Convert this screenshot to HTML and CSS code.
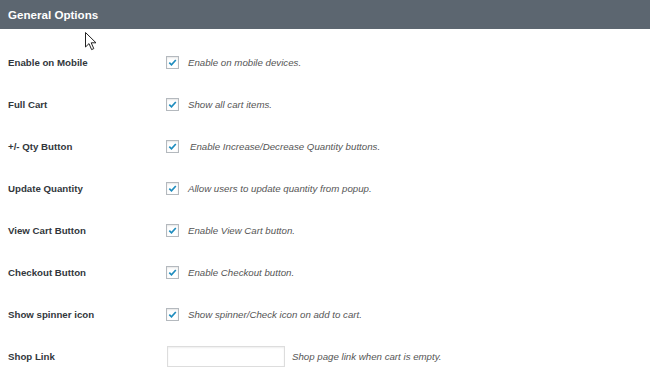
FILE: index.html
```html
<!DOCTYPE html>
<html lang="en">
<head>
	<meta charset="UTF-8">
	<title>General Options</title>
	<link rel="stylesheet" href="styles.css">
</head>
<body>
	<div class="panel">
		<h2 class="panel-title">General Options</h2>
		<div class="form-rows">
			<div class="row">
				<div class="label">Enable on Mobile</div>
				<div class="field"><span class="check"><svg viewBox="0 0 12 12"><path d="M2.5 6.2 L4.9 8.6 L9.6 3.2"/></svg></span><span class="desc">Enable on mobile devices.</span></div>
			</div>
			<div class="row">
				<div class="label">Full Cart</div>
				<div class="field"><span class="check"><svg viewBox="0 0 12 12"><path d="M2.5 6.2 L4.9 8.6 L9.6 3.2"/></svg></span><span class="desc">Show all cart items.</span></div>
			</div>
			<div class="row">
				<div class="label">+/- Qty Button</div>
				<div class="field"><span class="check"><svg viewBox="0 0 12 12"><path d="M2.5 6.2 L4.9 8.6 L9.6 3.2"/></svg></span><span class="desc desc-pad">Enable Increase/Decrease Quantity buttons.</span></div>
			</div>
			<div class="row">
				<div class="label">Update Quantity</div>
				<div class="field"><span class="check"><svg viewBox="0 0 12 12"><path d="M2.5 6.2 L4.9 8.6 L9.6 3.2"/></svg></span><span class="desc">Allow users to update quantity from popup.</span></div>
			</div>
			<div class="row">
				<div class="label">View Cart Button</div>
				<div class="field"><span class="check"><svg viewBox="0 0 12 12"><path d="M2.5 6.2 L4.9 8.6 L9.6 3.2"/></svg></span><span class="desc">Enable View Cart button.</span></div>
			</div>
			<div class="row">
				<div class="label">Checkout Button</div>
				<div class="field"><span class="check"><svg viewBox="0 0 12 12"><path d="M2.5 6.2 L4.9 8.6 L9.6 3.2"/></svg></span><span class="desc">Enable Checkout button.</span></div>
			</div>
			<div class="row">
				<div class="label">Show spinner icon</div>
				<div class="field"><span class="check"><svg viewBox="0 0 12 12"><path d="M2.5 6.2 L4.9 8.6 L9.6 3.2"/></svg></span><span class="desc">Show spinner/Check icon on add to cart.</span></div>
			</div>
			<div class="row">
				<div class="label">Shop Link</div>
				<div class="field"><span class="text-input"></span><span class="desc desc-input">Shop page link when cart is empty.</span></div>
			</div>
		</div>
		<svg class="cursor" viewBox="0 0 12 19"><path d="M0.5 0.5 L0.5 15 L4 11.6 L6.6 17.6 L8.8 16.6 L6.2 10.8 L11 10.8 Z"/></svg>
	</div>
</body>
</html>
```

FILE: styles.css
```css
*{
	box-sizing: border-box;
}
body{
	margin: 0;
	background-color: #fff;
	font-family: "Liberation Sans", Arial, sans-serif;
	color: #23282d;
}
.panel{
	position: relative;
	width: 650px;
	height: 386px;
	overflow: hidden;
}
.panel-title{
	margin: 0;
	height: 29px;
	line-height: 29px;
	padding-left: 8px;
	background-color: #5c6670;
	color: #fff;
	font-size: 11.6px;
	font-weight: bold;
}
.form-rows{
	padding-top: 12px;
}
.row{
	display: flex;
	align-items: center;
	height: 42px;
}
.label{
	width: 166px;
	padding-left: 8px;
	font-size: 9.7px;
	font-weight: bold;
	color: #32373c;
}
.field{
	display: flex;
	align-items: center;
}
.check{
	display: block;
	width: 13px;
	height: 13px;
	border: 1px solid #b4b9be;
	background-color: #fff;
	box-shadow: inset 0 1px 2px rgba(0,0,0,0.1);
}
.check svg{
	display: block;
	width: 11px;
	height: 11px;
}
.check path{
	fill: none;
	stroke: #1e8cbe;
	stroke-width: 1.8;
}
.desc{
	margin-left: 9px;
	font-size: 9.7px;
	font-style: italic;
	color: #555;
}
.desc-pad{
	margin-left: 11px;
}
.text-input{
	display: block;
	width: 118px;
	height: 21px;
	margin-left: 1px;
	border: 1px solid #ddd;
	box-shadow: inset 0 1px 2px rgba(0,0,0,0.07);
	background-color: #fff;
}
.desc-input{
	margin-left: 7px;
}
.cursor{
	position: absolute;
	left: 85px;
	top: 32px;
	width: 12px;
	height: 19px;
}
.cursor path{
	fill: #fff;
	stroke: #222;
	stroke-width: 1;
}
```
